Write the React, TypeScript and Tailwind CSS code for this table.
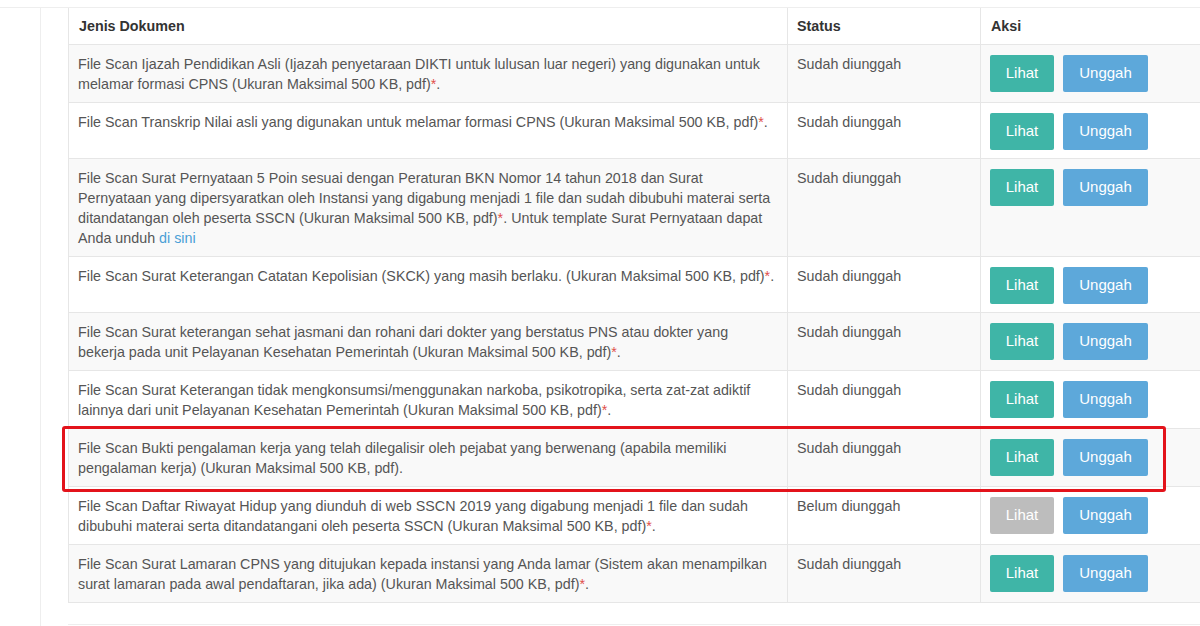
import React from 'react';

type Row = {
  lines: React.ReactNode[];
  uploaded: boolean;
};

const Star = () => <span className="text-[#e0504a]">*</span>;

const rows: Row[] = [
  {
    lines: [
      'File Scan Ijazah Pendidikan Asli (Ijazah penyetaraan DIKTI untuk lulusan luar negeri) yang digunakan untuk',
      <>melamar formasi CPNS (Ukuran Maksimal 500 KB, pdf)<Star />.</>,
    ],
    uploaded: true,
  },
  {
    lines: [
      <>File Scan Transkrip Nilai asli yang digunakan untuk melamar formasi CPNS (Ukuran Maksimal 500 KB, pdf)<Star />.</>,
    ],
    uploaded: true,
  },
  {
    lines: [
      'File Scan Surat Pernyataan 5 Poin sesuai dengan Peraturan BKN Nomor 14 tahun 2018 dan Surat',
      'Pernyataan yang dipersyaratkan oleh Instansi yang digabung menjadi 1 file dan sudah dibubuhi materai serta',
      <>ditandatangan oleh peserta SSCN (Ukuran Maksimal 500 KB, pdf)<Star />. Untuk template Surat Pernyataan dapat</>,
      <>Anda unduh <a className="text-[#4a9fd6]">di sini</a></>,
    ],
    uploaded: true,
  },
  {
    lines: [
      <>File Scan Surat Keterangan Catatan Kepolisian (SKCK) yang masih berlaku. (Ukuran Maksimal 500 KB, pdf)<Star />.</>,
    ],
    uploaded: true,
  },
  {
    lines: [
      'File Scan Surat keterangan sehat jasmani dan rohani dari dokter yang berstatus PNS atau dokter yang',
      <>bekerja pada unit Pelayanan Kesehatan Pemerintah (Ukuran Maksimal 500 KB, pdf)<Star />.</>,
    ],
    uploaded: true,
  },
  {
    lines: [
      'File Scan Surat Keterangan tidak mengkonsumsi/menggunakan narkoba, psikotropika, serta zat-zat adiktif',
      <>lainnya dari unit Pelayanan Kesehatan Pemerintah (Ukuran Maksimal 500 KB, pdf)<Star />.</>,
    ],
    uploaded: true,
  },
  {
    lines: [
      'File Scan Bukti pengalaman kerja yang telah dilegalisir oleh pejabat yang berwenang (apabila memiliki',
      'pengalaman kerja) (Ukuran Maksimal 500 KB, pdf).',
    ],
    uploaded: true,
  },
  {
    lines: [
      'File Scan Daftar Riwayat Hidup yang diunduh di web SSCN 2019 yang digabung menjadi 1 file dan sudah',
      <>dibubuhi materai serta ditandatangani oleh peserta SSCN (Ukuran Maksimal 500 KB, pdf)<Star />.</>,
    ],
    uploaded: false,
  },
  {
    lines: [
      'File Scan Surat Lamaran CPNS yang ditujukan kepada instansi yang Anda lamar (Sistem akan menampilkan',
      <>surat lamaran pada awal pendaftaran, jika ada) (Ukuran Maksimal 500 KB, pdf)<Star />.</>,
    ],
    uploaded: true,
  },
];

export default function App() {
  return (
    <div
      className="relative w-[1200px] h-[626px] overflow-hidden bg-white text-[14.3px] text-[#555]"
      style={{ fontFamily: '"Liberation Sans", Arial, sans-serif' }}
    >
      <div className="mt-[7px] border-t border-[#eeeeee]">
        <div className="ml-[40px] border-l border-[#eeeeee] pl-[27px] h-[626px]">
          <table className="w-[1160px] table-fixed border-collapse">
            <colgroup>
              <col className="w-[719px]" />
              <col className="w-[193px]" />
              <col className="w-[248px]" />
            </colgroup>
            <thead>
              <tr className="text-[#333] font-bold leading-[20px]">
                <th className="text-left border border-t-0 border-[#e6e6e6] px-[10px] py-[8px]">Jenis Dokumen</th>
                <th className="text-left border border-t-0 border-[#e6e6e6] px-[9px] py-[8px]">Status</th>
                <th className="text-left border border-t-0 border-[#e6e6e6] px-[10px] py-[8px]">Aksi</th>
              </tr>
            </thead>
            <tbody>
              {rows.map((row, i) => (
                <tr key={i} className={i % 2 === 0 ? 'bg-[#f9f9f9]' : 'bg-white'}>
                  <td className="align-top border border-[#e6e6e6] px-[9px] pt-[9px] pb-[8px] leading-[20px] whitespace-nowrap">
                    {row.lines.map((line, j) => (
                      <div key={j}>{line}</div>
                    ))}
                  </td>
                  <td className="align-top border border-[#e6e6e6] px-[9px] pt-[9px] pb-[8px] leading-[20px]">
                    {row.uploaded ? 'Sudah diunggah' : 'Belum diunggah'}
                  </td>
                  <td className="align-top border border-[#e6e6e6] px-[9px] pt-[10px] pb-[8px]">
                    <div className="flex gap-[9px]">
                      <button
                        className={`w-[64px] h-[37px] rounded-[2px] text-white text-[15px] ${
                          row.uploaded ? 'bg-[#3fb5a7]' : 'bg-[#bdbdbd]'
                        }`}
                      >
                        Lihat
                      </button>
                      <button className="w-[85px] h-[37px] rounded-[2px] bg-[#5da8da] text-white text-[15px]">
                        Unggah
                      </button>
                    </div>
                  </td>
                </tr>
              ))}
            </tbody>
          </table>
          <div className="mt-[21px] border-t border-[#eeeeee]" />
        </div>
      </div>

      {/* highlight annotation */}
      <div className="absolute left-[62px] top-[426px] w-[1104px] h-[66px] border-[3px] border-[#e3131b] rounded-[3px]" />
    </div>
  );
}
